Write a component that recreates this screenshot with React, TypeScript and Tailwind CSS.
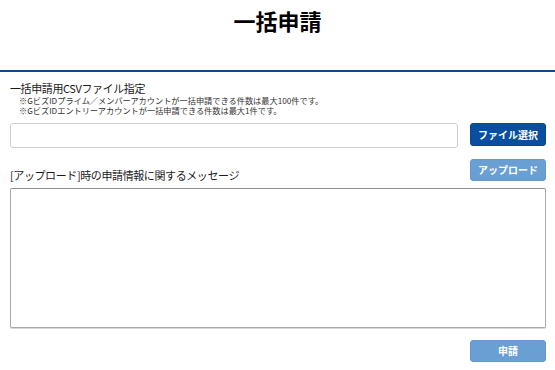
import React from "react";

const jp = { fontFamily: '"Noto Sans CJK JP", "Noto Sans", sans-serif' };

export default function App() {
  return (
    <div className="w-[555px] h-[370px] bg-white text-[#222] overflow-hidden" style={jp}>
      <div className="h-[72px] border-b-2 border-[#0d4a8a] pt-[6px]">
        <h1 className="text-center text-[22px] leading-[28px] font-bold text-black">一括申請</h1>
      </div>
      <div className="flex flex-col pl-[10px] pr-[9px]">
        <div className="mt-[9px] text-[11px] leading-[14px] tracking-[-0.4px] text-[#1a1a1a]">
          一括申請用CSVファイル指定
        </div>
        <div className="mt-[1px] pl-[9px] text-[8.2px] leading-[9.5px] text-[#333]">
          <div>※GビズIDプライム／メンバーアカウントが一括申請できる件数は最大100件です。</div>
          <div>※GビズIDエントリーアカウントが一括申請できる件数は最大1件です。</div>
        </div>
        <div className="mt-[8px] flex items-start">
          <div className="flex-1 h-[25px] border border-[#cfcfcf] rounded-[3px] bg-white" />
          <button className="ml-[12px] w-[76px] h-[23px] rounded-[3px] bg-[#0a4f9f] border border-[#08468d] text-white text-[10px] font-bold leading-none">
            ファイル選択
          </button>
        </div>
        <div className="mt-[11px] flex items-start justify-between">
          <div className="mt-[8px] text-[11px] leading-[16px] tracking-[-0.4px] text-[#1a1a1a]">
            [アップロード]時の申請情報に関するメッセージ
          </div>
          <button className="w-[76px] h-[22px] rounded-[3px] bg-[#6a9fd3] border border-[#6598cc] text-white text-[10px] font-bold leading-none">
            アップロード
          </button>
        </div>
        <div className="mt-[5px] h-[140px] border border-[#a9a9a9] border-t-[#8f8f8f] rounded-[2px] bg-white shadow-[0_1px_0_#d8d8d8]" />
        <div className="mt-[12px] flex justify-end">
          <button className="w-[76px] h-[22px] rounded-[3px] bg-[#6a9fd3] border border-[#6598cc] text-white text-[10px] font-bold leading-none">
            申請
          </button>
        </div>
      </div>
    </div>
  );
}
